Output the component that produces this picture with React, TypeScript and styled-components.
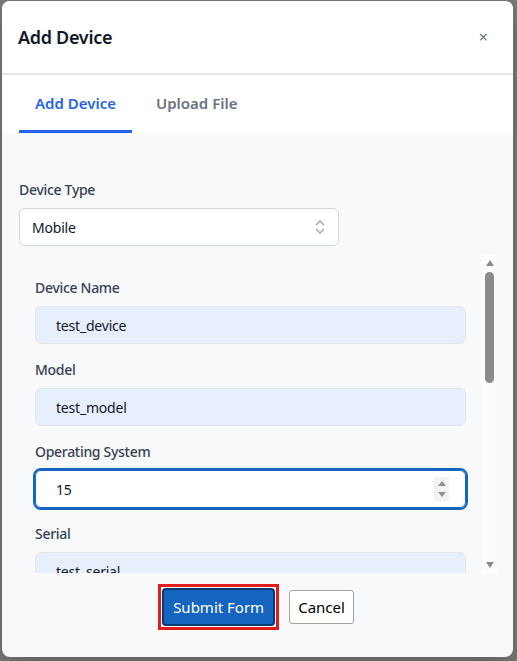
import React from 'react';
import styled, { createGlobalStyle } from 'styled-components';

const colors = {
  backdrop: '#7b7b7b',
  panel: '#f8f9fb',
  white: '#ffffff',
  line: '#e5e7eb',
  text: '#111827',
  label: '#374151',
  muted: '#6b7280',
  tabActive: '#2563eb',
  autofill: '#e8effc',
  focus: '#1565c0',
  primary: '#1565c0',
  primaryBorder: '#0d3a6e',
  highlight: '#e21b1b',
  scrollTrack: '#fcfcfd',
  scrollThumb: '#8a8a8a',
};

const GlobalStyle = createGlobalStyle`
  html, body {
    margin: 0;
    background: ${colors.backdrop};
    font-family: "Noto Sans", "Open Sans", sans-serif;
  }
  * { box-sizing: border-box; }
`;

type Field = { label: string; value: string; numeric?: boolean; active?: boolean };

const fields: Field[] = [
  { label: 'Device Name', value: 'test_device' },
  { label: 'Model', value: 'test_model' },
  { label: 'Operating System', value: '15', numeric: true, active: true },
  { label: 'Serial', value: 'test_serial' },
  { label: 'IMEI', value: '' },
  { label: 'Manufacturer', value: '' },
];

export default function App() {
  return (
    <>
      <GlobalStyle />
      <Backdrop>
        <Modal>
          <Header>
            <Title>Add Device</Title>
            <CloseButton aria-label="Close">×</CloseButton>
          </Header>

          <Tabs>
            <Tab $active>Add Device</Tab>
            <Tab>Upload File</Tab>
          </Tabs>

          <Body>
            <TypeField>
              <Label>Device Type</Label>
              <SelectBox>
                <span>Mobile</span>
                <svg width="12" height="18" viewBox="0 0 12 18" fill="none">
                  <path d="M2.5 6.5 L6 3 L9.5 6.5" stroke="#9ca3af" strokeWidth="1.4" strokeLinecap="round" strokeLinejoin="round" />
                  <path d="M2.5 11.5 L6 15 L9.5 11.5" stroke="#9ca3af" strokeWidth="1.4" strokeLinecap="round" strokeLinejoin="round" />
                </svg>
              </SelectBox>
            </TypeField>

            <ScrollFrame>
              <ScrollContent>
                {fields.map((f) => (
                  <FieldGroup key={f.label}>
                    <Label>{f.label}</Label>
                    <InputWrap>
                      <Input
                        type={f.numeric ? 'number' : 'text'}
                        defaultValue={f.value}
                        $filled={!!f.value && !f.active}
                        $active={!!f.active}
                        autoFocus={f.active}
                      />
                      {f.numeric && (
                        <Spinner>
                          <Arrow $dir="up" />
                          <Arrow $dir="down" />
                        </Spinner>
                      )}
                    </InputWrap>
                  </FieldGroup>
                ))}
              </ScrollContent>
              <Scrollbar>
                <ScrollArrow $dir="up" />
                <Thumb />
                <TrackFill />
                <ScrollArrow $dir="down" />
              </Scrollbar>
            </ScrollFrame>

            <Footer>
              <FocusRing>
                <PrimaryButton>Submit Form</PrimaryButton>
              </FocusRing>
              <SecondaryButton>Cancel</SecondaryButton>
            </Footer>
          </Body>
        </Modal>
      </Backdrop>
    </>
  );
}

const Backdrop = styled.div`
  padding: 1px 4px 4px 2px;
`;

const Modal = styled.div`
  width: 511px;
  height: 656px;
  background: ${colors.panel};
  border-radius: 8px;
  overflow: hidden;
  display: flex;
  flex-direction: column;
  box-shadow: 0 10px 30px rgba(0, 0, 0, 0.25);
`;

const Header = styled.div`
  height: 74px;
  flex-shrink: 0;
  background: ${colors.white};
  border-bottom: 2px solid ${colors.line};
  display: flex;
  align-items: center;
  justify-content: space-between;
  padding: 0 25px 0 16px;
`;

const Title = styled.h2`
  margin: 0;
  font-size: 18px;
  font-weight: 600;
  letter-spacing: -0.3px;
  color: ${colors.text};
`;

const CloseButton = styled.button`
  border: none;
  background: none;
  padding: 0;
  font-size: 16px;
  line-height: 1;
  color: ${colors.muted};
  font-family: inherit;
  cursor: pointer;
`;

const Tabs = styled.div`
  height: 58px;
  flex-shrink: 0;
  background: ${colors.white};
  display: flex;
  gap: 8px;
  padding: 0 17px;
`;

const Tab = styled.button<{ $active?: boolean }>`
  border: none;
  background: none;
  font-family: inherit;
  font-size: 15px;
  font-weight: 600;
  padding: 1px 16px 0;
  color: ${(p) => (p.$active ? colors.tabActive : colors.muted)};
  border-bottom: 3px solid ${(p) => (p.$active ? colors.tabActive : 'transparent')};
  cursor: pointer;
`;

const Body = styled.div`
  flex: 1;
  display: flex;
  flex-direction: column;
  padding: 47px 16px 0 17px;
`;

const TypeField = styled.div`
  display: flex;
  flex-direction: column;
  gap: 8px;
`;

const Label = styled.label`
  font-size: 14px;
  line-height: 20px;
  font-weight: 500;
  letter-spacing: -0.3px;
  color: ${colors.label};
`;

const SelectBox = styled.div`
  width: 320px;
  height: 38px;
  background: ${colors.white};
  border: 1px solid #d1d5db;
  border-radius: 6px;
  display: flex;
  align-items: center;
  justify-content: space-between;
  padding: 0 12px 0 12px;
  font-size: 14px;
  letter-spacing: -0.2px;
  color: ${colors.text};
`;

const ScrollFrame = styled.div`
  margin-top: 9px;
  height: 318px;
  width: 478px;
  display: flex;
`;

const ScrollContent = styled.div`
  flex: 1;
  overflow: hidden;
  padding: 23px 16px 0 16px;
`;

const Scrollbar = styled.div`
  width: 15px;
  flex-shrink: 0;
  background: ${colors.scrollTrack};
  display: flex;
  flex-direction: column;
  align-items: center;
  padding: 5px 0 5px;
`;

const ScrollArrow = styled.div<{ $dir: 'up' | 'down' }>`
  width: 0;
  height: 0;
  border-left: 4.5px solid transparent;
  border-right: 4.5px solid transparent;
  ${(p) =>
    p.$dir === 'up'
      ? `border-bottom: 6px solid ${colors.scrollThumb};`
      : `border-top: 6px solid ${colors.scrollThumb};`}
`;

const Thumb = styled.div`
  width: 9px;
  height: 111px;
  margin-top: 6px;
  border-radius: 5px;
  background: ${colors.scrollThumb};
`;

const TrackFill = styled.div`
  flex: 1;
`;

const FieldGroup = styled.div`
  display: flex;
  flex-direction: column;
  gap: 8px;
  margin-bottom: 16px;
`;

const InputWrap = styled.div`
  position: relative;
`;

const Input = styled.input<{ $filled: boolean; $active: boolean }>`
  display: block;
  width: 100%;
  height: 38px;
  border-radius: 6px;
  padding: 0 40px 0 20px;
  font-family: inherit;
  font-size: 14px;
  letter-spacing: -0.2px;
  color: ${colors.text};
  background: ${(p) => (p.$filled ? colors.autofill : colors.white)};
  border: 1px solid ${(p) => (p.$active ? colors.focus : p.$filled ? colors.line : '#d1d5db')};
  outline: ${(p) => (p.$active ? `2px solid ${colors.focus}` : 'none')};
  caret-color: ${colors.text};
  -moz-appearance: textfield;

  &::-webkit-inner-spin-button,
  &::-webkit-outer-spin-button {
    -webkit-appearance: none;
    margin: 0;
  }
`;

const Spinner = styled.div`
  position: absolute;
  right: 17px;
  top: 7px;
  width: 15px;
  height: 24px;
  background: #f3f3f4;
  display: flex;
  flex-direction: column;
  align-items: center;
  justify-content: center;
  gap: 6px;
`;

const Arrow = styled.div<{ $dir: 'up' | 'down' }>`
  width: 0;
  height: 0;
  border-left: 4.5px solid transparent;
  border-right: 4.5px solid transparent;
  ${(p) =>
    p.$dir === 'up'
      ? `border-bottom: 5px solid #8f8f8f;`
      : `border-top: 5px solid #8f8f8f;`}
`;

const Footer = styled.div`
  display: flex;
  align-items: center;
  justify-content: center;
  gap: 10px;
  padding: 11px 4px 0 0;
`;

const FocusRing = styled.span`
  display: inline-flex;
  border: 3px solid ${colors.highlight};
  padding: 1px;
`;

const PrimaryButton = styled.button`
  height: 38px;
  padding: 0 9px;
  font-family: inherit;
  font-size: 15px;
  color: ${colors.white};
  background: ${colors.primary};
  border: 2px solid ${colors.primaryBorder};
  border-radius: 4px;
  cursor: pointer;
`;

const SecondaryButton = styled.button`
  height: 34px;
  padding: 0 8px;
  font-family: inherit;
  font-size: 15px;
  color: #000;
  background: ${colors.white};
  border: 1px solid #a9a39c;
  border-radius: 3px;
  cursor: pointer;
`;
